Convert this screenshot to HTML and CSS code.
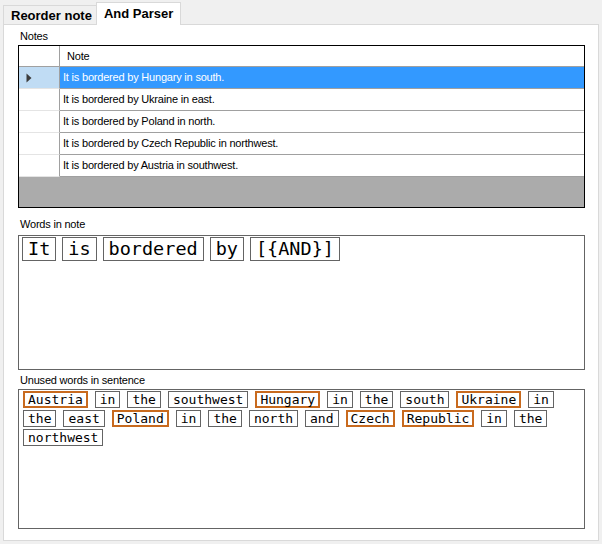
FILE: index.html
```html
<!DOCTYPE html>
<html>
<head>
<meta charset="utf-8">
<link rel="stylesheet" href="styles.css">
</head>
<body>
<div class="tabs">
  <div class="tab">Reorder note</div>
  <div class="tab active">And Parser</div>
</div>
<div class="panel">
  <div class="label first">Notes</div>
  <div class="grid">
    <div class="grow ghead"><div class="rh"></div><div class="cell hcell">Note</div></div>
    <div class="grow sel"><div class="rh"><svg width="6" height="10" viewBox="0 0 6 10"><path d="M0.5 0.5 L5.5 5 L0.5 9.5 Z" fill="#3c3c3c"/></svg></div><div class="cell">It is bordered by Hungary in south.</div></div>
    <div class="grow"><div class="rh"></div><div class="cell">It is bordered by Ukraine in east.</div></div>
    <div class="grow"><div class="rh"></div><div class="cell">It is bordered by Poland in north.</div></div>
    <div class="grow"><div class="rh"></div><div class="cell">It is bordered by Czech Republic in northwest.</div></div>
    <div class="grow"><div class="rh"></div><div class="cell">It is bordered by Austria in southwest.</div></div>
  </div>
  <div class="label second">Words in note</div>
  <div class="box words">
    <span class="tok">It</span><span class="tok">is</span><span class="tok">bordered</span><span class="tok">by</span><span class="tok">[{AND}]</span>
  </div>
  <div class="label third">Unused words in sentence</div>
  <div class="box unused">
    <span class="tk hi">Austria</span><span class="tk">in</span><span class="tk">the</span><span class="tk">southwest</span><span class="tk hi">Hungary</span><span class="tk">in</span><span class="tk">the</span><span class="tk">south</span><span class="tk hi">Ukraine</span><span class="tk">in</span><span class="tk">the</span><span class="tk">east</span><span class="tk hi">Poland</span><span class="tk">in</span><span class="tk">the</span><span class="tk">north</span><span class="tk">and</span><span class="tk hi">Czech</span><span class="tk hi">Republic</span><span class="tk">in</span><span class="tk">the</span><span class="tk">northwest</span>
  </div>
</div>
</body>
</html>
```
FILE: styles.css
```css
html, body {
  margin: 0;
  padding: 0;
  background: #f0f0f0;
  width: 602px;
  height: 544px;
  overflow: hidden;
  font-family: "Liberation Sans", Arial, sans-serif;
}
.tabs {
  display: flex;
  align-items: flex-end;
  height: 24px;
  padding-left: 3px;
}
.tab {
  height: 19px;
  box-sizing: border-box;
  border: 1px solid #d9d9d9;
  border-bottom: none;
  border-right: none;
  background: #f0f0f0;
  font-weight: bold;
  font-size: 13px;
  line-height: 20px;
  padding: 0 4px 0 7px;
  color: #000;
}
.tab.active {
  height: 23px;
  margin-bottom: -1px;
  border-right: 1px solid #d9d9d9;
  background: #fff;
  line-height: 21px;
  padding: 0 7px 0 7px;
  position: relative;
  z-index: 1;
}
.panel {
  margin-left: 3px;
  width: 596px;
  height: 517px;
  box-sizing: border-box;
  border: 1px solid #d9d9d9;
  background: #fff;
  padding: 5px 12px 0 14px;
}
.label {
  font-size: 11px;
  letter-spacing: -0.2px;
  line-height: 13px;
  height: 15px;
  padding-left: 2px;
  color: #000;
}
.label.second {
  margin-top: 10px;
  height: 17px;
}
.label.third {
  margin-top: 4px;
  height: 15px;
}
.grid {
  width: 567px;
  height: 163px;
  box-sizing: border-box;
  border: 1px solid #000;
  background: #ababab;
  display: flex;
  flex-direction: column;
}
.grow {
  display: flex;
  height: 22px;
  flex: none;
  background: #fff;
  font-size: 11px;
  letter-spacing: -0.2px;
}
.grow.ghead {
  height: 21px;
}
.rh {
  width: 41px;
  box-sizing: border-box;
  border-right: 1px solid #a0a0a0;
  border-bottom: 1px solid #e4e4e4;
  display: flex;
  align-items: center;
  padding-left: 7px;
}
.ghead .rh {
  border-bottom-color: #a0a0a0;
}
.cell {
  flex: 1;
  box-sizing: border-box;
  border-bottom: 1px solid #a0a0a0;
  padding-left: 3px;
  line-height: 21px;
  color: #000;
  white-space: nowrap;
}
.hcell {
  padding-left: 7px;
  line-height: 20px;
}
.sel .rh {
  background: #c0dcf4;
}
.sel .cell {
  background: #3399ff;
  color: #fff;
}
.box {
  width: 567px;
  box-sizing: border-box;
  border: 1px solid #646464;
  background: #fff;
  display: flex;
  flex-wrap: wrap;
  align-content: flex-start;
}
.words {
  height: 135px;
  padding: 1px 0 0 3px;
  gap: 0 6px;
}
.unused {
  height: 140px;
  padding: 1px 0 0 4px;
  gap: 2px 7px;
}
.tok {
  font-family: "DejaVu Sans Mono", monospace;
  font-size: 18.5px;
  line-height: 22px;
  height: 24px;
  box-sizing: border-box;
  border: 1px solid #646464;
  padding: 0 5px;
  color: #000;
}
.tk {
  font-family: "DejaVu Sans Mono", monospace;
  font-size: 13px;
  line-height: 15px;
  height: 17px;
  box-sizing: border-box;
  border: 1px solid #646464;
  padding: 0 4px;
  color: #000;
}
.tk.hi {
  border: 2px solid #c86a1e;
  padding: 0 3px;
  line-height: 13px;
}
```
